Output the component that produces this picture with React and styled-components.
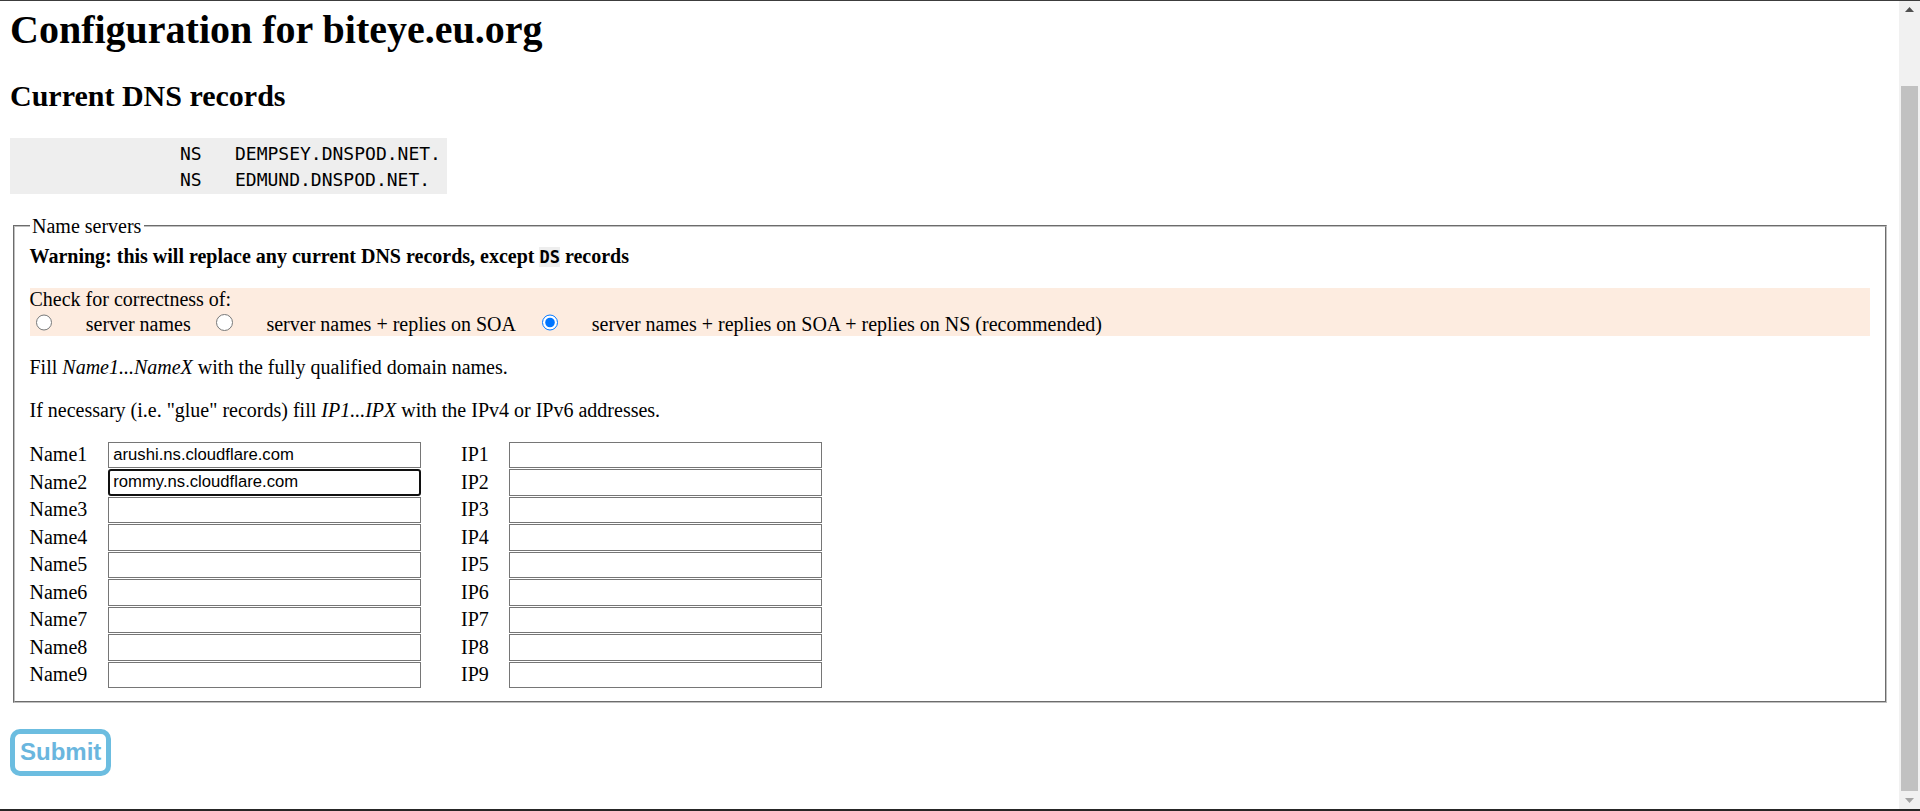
import { useState } from 'react'
import styled, { createGlobalStyle } from 'styled-components'

const records = [
  { type: 'NS', value: 'DEMPSEY.DNSPOD.NET.' },
  { type: 'NS', value: 'EDMUND.DNSPOD.NET.' },
]

const checks = [
  { id: 'names', label: 'server names' },
  { id: 'soa', label: 'server names + replies on SOA' },
  { id: 'ns', label: 'server names + replies on SOA + replies on NS (recommended)' },
]

const initialNames = ['arushi.ns.cloudflare.com', 'rommy.ns.cloudflare.com', '', '', '', '', '', '', '']

export default function App() {
  const [check, setCheck] = useState('ns')
  const [names, setNames] = useState(initialNames)
  const [ips, setIps] = useState(Array(9).fill(''))

  const setAt = (list, setter, i, v) => setter(list.map((x, j) => (j === i ? v : x)))

  return (
    <Window>
      <GlobalStyle />
      <Page>
        <Title>Configuration for biteye.eu.org</Title>
        <Subtitle>Current DNS records</Subtitle>
        <Records>
          {records.map((r, i) => (
            <RecordRow key={i}>
              <span />
              <span>{r.type}</span>
              <span>{r.value}</span>
            </RecordRow>
          ))}
        </Records>

        <form onSubmit={(e) => e.preventDefault()}>
          <Fieldset>
            <Legend>Name servers</Legend>
            <Warning>
              Warning: this will replace any current DNS records, except <Code>DS</Code> records
            </Warning>

            <CheckBox>
              Check for correctness of:
              <br />
              {checks.map((c) => (
                <label key={c.id}>
                  <Radio
                    type="radio"
                    name="check"
                    checked={check === c.id}
                    onChange={() => setCheck(c.id)}
                  />
                  <OptionText>{c.label}</OptionText>
                </label>
              ))}
            </CheckBox>

            <Para>
              Fill <i>Name1...NameX</i> with the fully qualified domain names.
            </Para>
            <Para>
              If necessary (i.e. "glue" records) fill <i>IP1...IPX</i> with the IPv4 or IPv6 addresses.
            </Para>

            <ServerGrid>
              {names.map((n, i) => (
                <Row key={i}>
                  <FieldLabel>Name{i + 1}</FieldLabel>
                  <TextInput
                    value={n}
                    $focused={i === 1}
                    onChange={(e) => setAt(names, setNames, i, e.target.value)}
                  />
                  <FieldLabel $indent>IP{i + 1}</FieldLabel>
                  <TextInput
                    value={ips[i]}
                    onChange={(e) => setAt(ips, setIps, i, e.target.value)}
                  />
                </Row>
              ))}
            </ServerGrid>
          </Fieldset>

          <SubmitButton type="submit">Submit</SubmitButton>
        </form>
      </Page>

      <Scrollbar>
        <ScrollArrow>
          <svg width="9" height="5" viewBox="0 0 9 5"><path d="M0 5 L4.5 0 L9 5 Z" fill="currentColor" /></svg>
        </ScrollArrow>
        <Thumb />
        <ScrollArrow $muted>
          <svg width="9" height="5" viewBox="0 0 9 5"><path d="M0 0 L4.5 5 L9 0 Z" fill="currentColor" /></svg>
        </ScrollArrow>
      </Scrollbar>
    </Window>
  )
}

const GlobalStyle = createGlobalStyle`
  html, body {
    margin: 0;
    height: 100%;
    overflow: hidden;
    background: #fff;
  }
  body {
    font-family: "Liberation Serif", "Times New Roman", serif;
    font-size: 20px;
    color: #000;
  }
`

const Window = styled.div`
  height: 811px;
  box-sizing: border-box;
  border-top: 1px solid #3c3c3c;
  border-bottom: 2px solid #262626;
  display: flex;
  overflow: hidden;
`

const Page = styled.main`
  flex: 1;
  min-width: 0;
  padding: 0 10px;
  overflow: hidden;
`

const Title = styled.h1`
  font-size: 40px;
  font-weight: bold;
  margin: 4.5px 0 26.8px;
`

const Subtitle = styled.h2`
  font-size: 30px;
  font-weight: bold;
  margin: 0 0 24.9px;
`

const Records = styled.div`
  display: grid;
  width: fit-content;
  background: #eee;
  padding: 3px 6px 1px 5px;
  margin-bottom: 20.4px;
  font-family: "DejaVu Sans Mono", "Liberation Mono", monospace;
  font-size: 18px;
  line-height: 26px;
`

const RecordRow = styled.div`
  display: grid;
  grid-template-columns: 165px 55px auto;
  white-space: pre;
`

const Fieldset = styled.fieldset`
  margin: 0 2.5px;
  padding: 7px 15px 12.5px;
  border: 2px groove rgb(192, 192, 192);
`

const Legend = styled.legend`
  padding: 0 2.5px;
  font-size: 20px;
`

const Warning = styled.div`
  font-weight: bold;
`

const Code = styled.code`
  font-family: "DejaVu Sans Mono", "Liberation Mono", monospace;
  font-size: 17px;
  background: #eee;
`

const CheckBox = styled.div`
  margin: 20px 0;
  background: #fdece0;
`

const Radio = styled.input`
  width: 16.25px;
  height: 16.25px;
  margin: 3.75px 3.75px 0 6.25px;
  vertical-align: baseline;
`

const OptionText = styled.span`
  margin: 0 19.5px 0 30px;
`

const Para = styled.p`
  margin: 20px 0;
`

const ServerGrid = styled.div`
  display: grid;
  grid-template-columns: 78.8px 312.4px 88.6px 312.4px;
  grid-auto-rows: 26.5px;
  row-gap: 1px;
  align-items: center;
`

const Row = styled.div`
  display: contents;
`

const FieldLabel = styled.span`
  padding-left: ${(p) => (p.$indent ? '40.3px' : '0')};
`

const TextInput = styled.input`
  box-sizing: border-box;
  width: 100%;
  height: 26.5px;
  margin: 0;
  padding: 0 0 0 ${(p) => (p.$focused ? '3px' : '4px')};
  border: ${(p) => (p.$focused ? '2px solid #101010' : '1px solid #767676')};
  border-radius: ${(p) => (p.$focused ? '3px' : '0')};
  font-family: "Liberation Sans", Arial, sans-serif;
  font-size: 16.67px;
  color: #000;
  background: #fff;
  outline: none;
`

const SubmitButton = styled.button`
  margin-top: 26px;
  height: 47.5px;
  padding: 0 5px;
  border: 5px solid #6cbde0;
  border-radius: 10px;
  background: #fff;
  color: #6ab6de;
  font-family: "Liberation Sans", Arial, sans-serif;
  font-size: 24px;
  font-weight: bold;
  cursor: pointer;
`

const Scrollbar = styled.div`
  flex: none;
  width: 21px;
  background: #f1f1f1;
  display: flex;
  flex-direction: column;
  align-items: center;
`

const ScrollArrow = styled.div`
  flex: none;
  height: 17px;
  width: 100%;
  display: flex;
  align-items: center;
  justify-content: center;
  color: ${(p) => (p.$muted ? '#a3a3a3' : '#505050')};
  margin-top: ${(p) => (p.$muted ? 'auto' : '0')};
`

const Thumb = styled.div`
  flex: none;
  width: 17px;
  height: 705px;
  margin-top: 68px;
  background: #c1c1c1;
`
